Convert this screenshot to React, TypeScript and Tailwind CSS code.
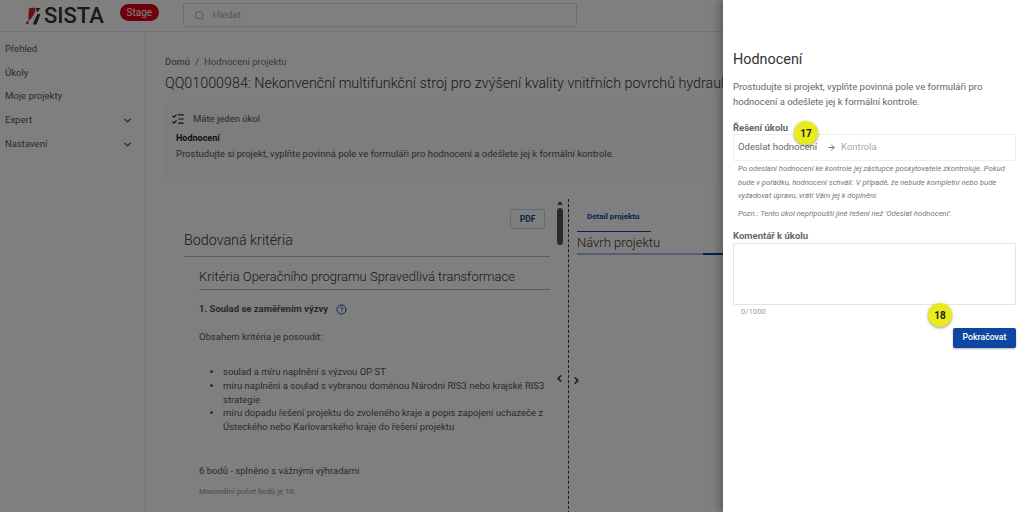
import { ChevronDown, ChevronLeft, ChevronRight, CircleHelp, ListChecks, Search, ArrowRight } from "lucide-react"

const navItems = [
  { label: "Přehled" },
  { label: "Úkoly" },
  { label: "Moje projekty" },
  { label: "Expert", sub: true },
  { label: "Nastavení", sub: true },
]

function Logo() {
  return (
    <div className="flex items-center gap-[3px]">
      <svg width="15" height="18" viewBox="0 0 15 18">
        <path d="M3 1.5 C4 0.7 8 0.5 9.5 1 C9.5 6 6 11 2.6 14 C2.4 10 2.5 5 3 1.5 Z M0.4 14.3 H2.6 L2.3 17.2 H0 Z" fill="#d01f26" />
        <path d="M10 1 H14.5 L11 5.5 C10.5 4 10.2 2.5 10 1 Z M11.5 7 H14.5 L10.5 17.5 H7 C7 16 9.5 11 11.5 7 Z" fill="#333" />
      </svg>
      <span className="text-[22px] leading-[20px] font-medium text-[#333] font-['Roboto',sans-serif]">SISTA</span>
    </div>
  )
}

function Badge({ n, className }: { n: number; className: string }) {
  return (
    <div className={`absolute flex h-6 w-6 items-center justify-center rounded-full bg-[#eaea1c] text-[10px] font-bold text-[#1a1a1a] shadow-[0_1px_3px_rgba(0,0,0,0.4)] ${className}`}>
      {n}
    </div>
  )
}

export default function App() {
  return (
    <div className="relative flex h-[512px] w-[1024px] flex-col overflow-hidden bg-white font-['Roboto',sans-serif] text-[#333]">
      {/* top bar */}
      <header className="flex h-8 shrink-0 items-start border-b border-[#e4e4e4] pl-[26px]">
        <div className="mt-[6px]"><Logo /></div>
        <span className="mt-1 ml-[16px] flex h-[17px] w-[39px] items-center justify-center rounded-full bg-[#e0001b] text-[10px] text-white">Stage</span>
        <div className="mt-[3px] ml-6 flex h-[24px] w-[394px] items-center gap-2 rounded-[2px] border border-[#dcdcdc] pl-[10px] text-[9.5px] text-[#aaa]">
          <Search size={11} />
          <span>Hledat</span>
        </div>
      </header>

      <div className="flex min-h-0 flex-1">
        {/* sidebar */}
        <nav className="flex w-[146px] shrink-0 flex-col border-r border-[#e4e4e4] pt-[5px] text-[9.5px] text-[#555]">
          {navItems.map((it) => (
            <div key={it.label} className="flex h-[23.8px] items-center justify-between pr-[12px] pl-[5px]">
              <span>{it.label}</span>
              {it.sub && <ChevronDown size={11} strokeWidth={2.5} className="text-[#0d47a1]" />}
            </div>
          ))}
        </nav>

        {/* content */}
        <main className="min-w-0 flex-1 overflow-hidden pt-[24px] pl-[19px]">
          <div className="text-[9.5px] leading-3 text-[#777]">
            <span className="font-medium">Domů</span>
            <span className="mx-[5px]">/</span>
            <span>Hodnocení projektu</span>
          </div>
          <h1 className="mt-[5px] text-[14.3px] leading-[20px] font-light whitespace-nowrap text-[#333]">
            QQ01000984: Nekonvenční multifunkční stroj pro zvýšení kvality vnitřních povrchů hydraulických válců
          </h1>

          <section className="mt-[10px] h-[80px] w-[548px] bg-[#fafafa] pt-[9px] pl-[6px]">
            <div className="flex items-center gap-[8px] text-[9.5px] leading-3 text-[#555]">
              <ListChecks size={14} className="text-[#222]" />
              <span>Máte jeden úkol</span>
            </div>
            <div className="mt-[6px] pl-[5px] text-[9px] leading-3 font-bold text-[#222]">Hodnocení</div>
            <p className="mt-[4px] pl-[5px] text-[9.5px] leading-3 text-[#555]">
              Prostudujte si projekt, vyplňte povinná pole ve formuláři pro hodnocení a odešlete jej k formální kontrole.
            </p>
          </section>

          <div className="mt-[16px] flex">
            {/* left pane */}
            <div className="w-[385px] shrink-0 pt-[10px] pl-[19px]">
              <div className="flex w-[366px] justify-end pr-[5px]">
                <span className="flex h-5 w-[35px] items-center justify-center rounded-[2px] border border-[#cdd6e4] text-[8.5px] font-bold text-[#0d47a1]">PDF</span>
              </div>
              <h2 className="mt-[1px] w-[366px] border-b border-[#bbb] pb-[6px] text-[14.3px] leading-[20px] font-light">Bodovaná kritéria</h2>
              <div className="w-[351px] pl-[15px] box-content">
                <h3 className="mt-[12px] w-[351px] border-b border-[#bbb] pb-[4px] text-[13px] leading-[16px] font-light">
                  Kritéria Operačního programu Spravedlivá transformace
                </h3>
                <div className="mt-[13px] flex items-center gap-[8px] text-[9.5px] leading-3 font-bold text-[#555]">
                  1. Soulad se zaměřením výzvy
                  <CircleHelp size={11} className="text-[#0d47a1]" />
                </div>
                <p className="mt-[16px] text-[9.5px] leading-3 text-[#555]">Obsahem kritéria je posoudit:</p>
                <ul className="mt-[22px] w-[351px] list-disc pl-6 text-[9.5px] leading-[13.8px] text-[#555]">
                  <li>soulad a míru naplnění s výzvou OP ST</li>
                  <li>míru naplnění a soulad s vybranou doménou Národní RIS3 nebo krajské RIS3 strategie</li>
                  <li>míru dopadu řešení projektu do zvoleného kraje a popis zapojení uchazeče z Ústeckého nebo Karlovarského kraje do řešení projektu</li>
                </ul>
                <p className="mt-[31px] text-[9.5px] leading-3 text-[#555]">6 bodů - splněno s vážnými výhradami</p>
                <p className="mt-[10px] text-[7.7px] leading-[10px] font-medium text-[#aaa]">Maximální počet bodů je 18.</p>
              </div>
            </div>

            {/* scrollbar */}
            <div className="flex w-[18px] shrink-0 flex-col items-center pt-[2px] pl-[1px]">
              <div className="h-0 w-0 border-x-[3px] border-b-[4px] border-x-transparent border-b-[#555]" />
              <div className="mt-[3px] h-[37px] w-[6px] rounded-full bg-[#555]" />
              <ChevronLeft size={11} strokeWidth={3} className="mt-[128px] text-[#222]" />
            </div>

            {/* right pane */}
            <div className="flex-1 border-l border-dashed border-[#333] h-[320px]">
              <div className="flex">
                <div className="w-[8px]">
                  <ChevronRight size={11} strokeWidth={3} className="mt-[176px] ml-[2px] text-[#222]" />
                </div>
                <div className="w-[146px] shrink-0">
                  <div className="mt-[12px] w-[74px] border-b border-[#0d47a1] pb-[8px] pl-[10px] text-[8px] leading-3 font-bold text-[#0d47a1]">Detail projektu</div>
                  <div className="mt-[2px] flex flex-col text-[13px] leading-[18px] font-light">
                    Návrh projektu
                    <div className="mt-[1px] flex h-[2px]">
                      <div className="w-[126px] bg-[#a9bde0]" />
                      <div className="flex-1 bg-[#0d47a1]" />
                    </div>
                  </div>
                </div>
              </div>
            </div>
          </div>
        </main>
      </div>

      {/* dim overlay */}
      <div className="absolute inset-0 bg-black/50" />

      {/* drawer */}
      <aside className="absolute top-0 right-0 bottom-0 w-[301px] bg-white pt-[50px] pr-[8px] pl-[10px] shadow-[-4px_0_8px_rgba(0,0,0,0.25)]">
        <h2 className="text-[14.4px] leading-[20px] text-[#333]">Hodnocení</h2>
        <p className="mt-[9px] text-[9.5px] leading-[15px] text-[#666]">
          Prostudujte si projekt, vyplňte povinná pole ve formuláři pro hodnocení a odešlete jej k formální kontrole.
        </p>
        <div className="mt-[13px] text-[9.5px] leading-3 font-bold text-[#666]">Řešení úkolu</div>
        <div className="flex h-[27px] items-center rounded-[2px] border border-[#eee] pl-[4px] text-[9.5px] text-[#666]">
          <span>Odeslat hodnocení</span>
          <ArrowRight size={9} strokeWidth={2.5} className="mr-[5px] ml-[10px] text-[#666]" />
          <span className="text-[#aaa]">Kontrola</span>
        </div>
        <div className="px-[5px] pt-[1px] text-[7.7px] leading-[13.5px] text-[#777] italic">
          <p>Po odeslání hodnocení ke kontrole jej zástupce poskytovatele zkontroluje. Pokud bude v pořádku, hodnocení schválí. V případě, že nebude kompletní nebo bude vyžadovat úpravu, vrátí Vám jej k doplnění.</p>
          <p className="mt-[4px]">Pozn.: Tento úkol nepřipouští jiné řešení než 'Odeslat hodnocení'.</p>
        </div>
        <div className="mt-[10px] text-[9.5px] leading-3 font-bold text-[#666]">Komentář k úkolu</div>
        <div className="mt-[1px] h-[62px] rounded-[2px] border border-[#e4e4e4]" />
        <div className="mt-[1px] pl-[8px] text-[7.7px] leading-3 text-[#999]">0/1000</div>
        <div className="mt-[10px] flex justify-end">
          <span className="flex h-5 w-[63px] items-center justify-center rounded-[2px] bg-[#0d47a1] text-[8.7px] font-medium text-white shadow-[0_1px_2px_rgba(0,0,0,0.3)]">Pokračovat</span>
        </div>
        <Badge n={17} className="top-[121px] left-[71px]" />
        <Badge n={18} className="top-[303px] left-[205px]" />
      </aside>
    </div>
  )
}
